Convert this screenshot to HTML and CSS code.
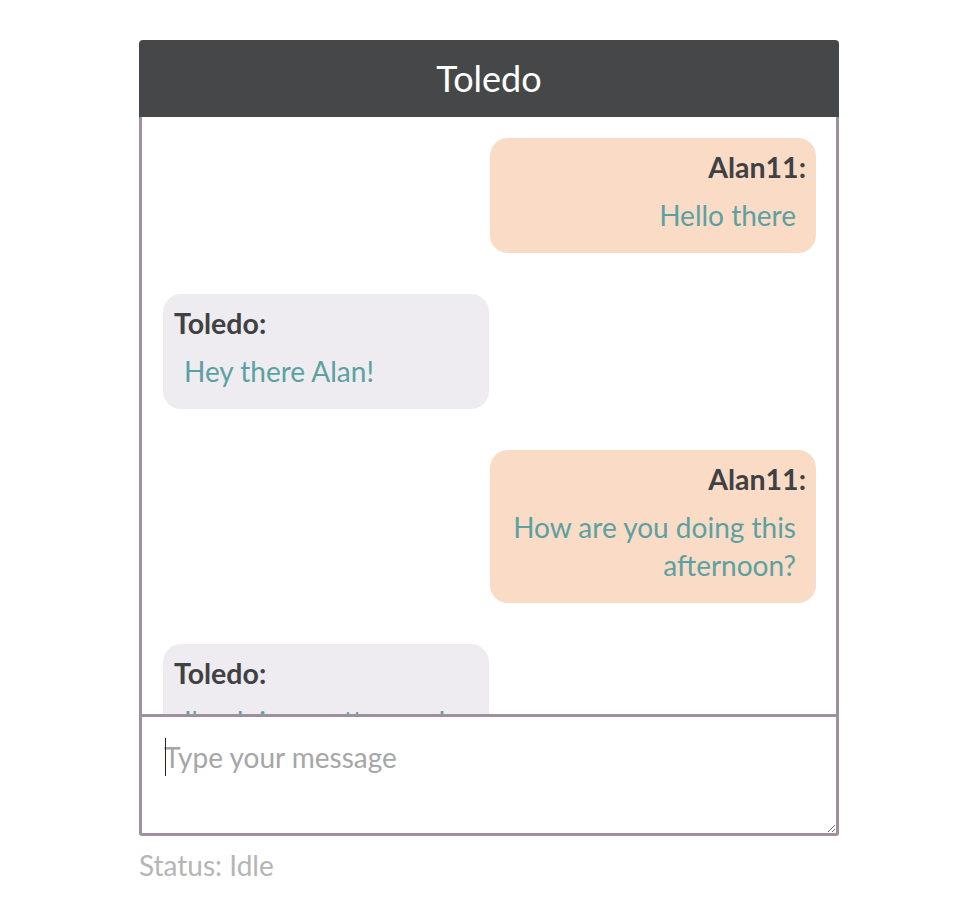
FILE: index.html
```html
<!DOCTYPE html>
<html>
<head>
<meta charset="utf-8">
<title>Toledo chat</title>
<link rel="stylesheet" href="styles.css">
</head>
<body>
<div class="chat">
  <div class="chat-header">Toledo</div>
  <div class="messages">
    <div class="msg msg-out">
      <div class="msg-name">Alan11:</div>
      <p class="msg-text">Hello there</p>
    </div>
    <div class="msg msg-in">
      <div class="msg-name">Toledo:</div>
      <p class="msg-text">Hey there Alan!</p>
    </div>
    <div class="msg msg-out">
      <div class="msg-name">Alan11:</div>
      <p class="msg-text">How are you doing this afternoon?</p>
    </div>
    <div class="msg msg-in">
      <div class="msg-name">Toledo:</div>
      <p class="msg-text">I'm doing pretty good, thanks for asking!</p>
    </div>
  </div>
  <div class="composer">
    <textarea class="composer-input" placeholder="Type your message"></textarea>
    <span class="caret"></span>
  </div>
  <div class="status">Status: Idle</div>
</div>
</body>
</html>
```

FILE: styles.css
```css
* { box-sizing: border-box; }

body {
  margin: 0;
  padding-right: 2px;
  background: #fff;
  font-family: Lato, "Open Sans", sans-serif;
}

.chat {
  width: 700px;
  margin: 40px auto 0;
}

.chat-header {
  height: 77px;
  background: #464749;
  color: #fff;
  border-radius: 4px 4px 0 0;
  font-size: 36px;
  line-height: 77px;
  text-align: center;
}

.messages {
  height: 597px;
  overflow: hidden;
  border: 3px solid #a08f9c;
  border-top: 0;
  border-bottom: 0;
  padding: 21px 20px 0 21px;
  display: flex;
  flex-direction: column;
  gap: 41px;
}

.msg {
  width: 326px;
  flex: none;
  border-radius: 18px;
  padding: 10px 10px 10px 11px;
}

.msg-out {
  align-self: flex-end;
  background: #fadbc6;
  text-align: right;
}

.msg-in {
  align-self: flex-start;
  background: #eeecf1;
  text-align: left;
}

.msg-name {
  font-size: 28.5px;
  font-weight: 700;
  line-height: 39px;
  color: #404143;
}

.msg-text {
  margin: 9px 10px;
  font-size: 28px;
  line-height: 38px;
  color: #5ba1a1;
}

.composer {
  position: relative;
}

.composer-input {
  display: block;
  width: 700px;
  height: 122px;
  margin: 0;
  border: 3px solid #a08f9c;
  border-radius: 0 0 3px 3px;
  padding: 23px 22px 17px;
  font-family: Lato, "Open Sans", sans-serif;
  font-size: 28px;
  color: #444;
  outline: none;
}

.composer-input::placeholder {
  color: #a6a6a6;
}

.caret {
  position: absolute;
  left: 26px;
  top: 24px;
  width: 1px;
  height: 38px;
  background: #222;
}

.status {
  margin-top: 12px;
  font-size: 28px;
  color: #b5b5b5;
}
```
